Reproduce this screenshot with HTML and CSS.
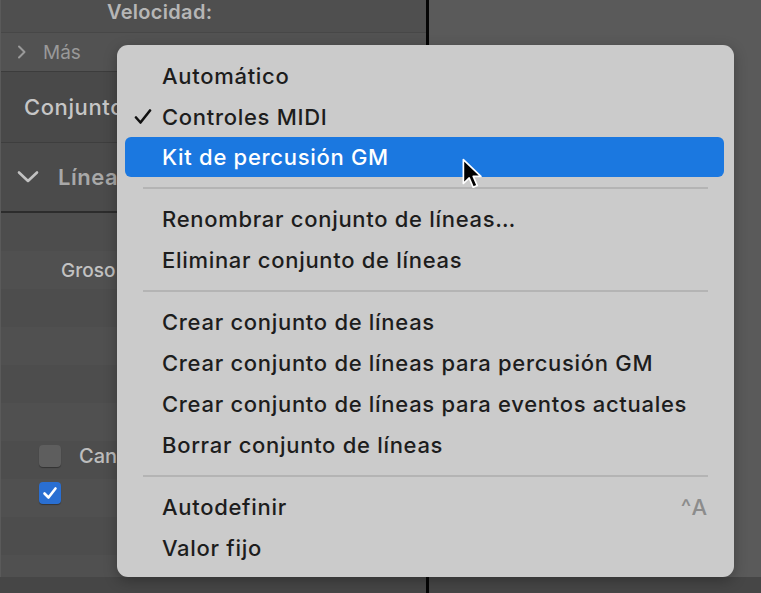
FILE: index.html
```html
<!DOCTYPE html>
<html lang="es">
<head>
    <meta charset="UTF-8">
    <meta name="viewport" content="width=device-width, initial-scale=1.0">
    <title>Conjunto de líneas</title>
    <link rel="stylesheet" href="styles.css">
</head>
<body>
    <div class="workspace">
        <div class="inspector">
            <div class="row row-velocidad"><span class="label-top">Velocidad:</span></div>
            <div class="row row-mas">
                <svg class="chev-right" width="10" height="14" viewBox="0 0 10 14"><path d="M2 1.5 L7.5 7 L2 12.5" fill="none" stroke="#9a9a9a" stroke-width="2" stroke-linecap="round" stroke-linejoin="round"/></svg>
                <span>Más</span>
            </div>
            <div class="row row-conjunto"><span>Conjunto</span></div>
            <div class="row row-linea">
                <svg class="chev-down" width="22" height="14" viewBox="0 0 22 14"><path d="M2 2.5 L11 11 L20 2.5" fill="none" stroke="#c2c2c2" stroke-width="2.6" stroke-linecap="round" stroke-linejoin="round"/></svg>
                <span>Línea</span>
            </div>
            <div class="stripes">
                <div class="stripe"></div>
                <div class="stripe"><span class="groso">Groso</span></div>
                <div class="stripe"></div>
                <div class="stripe"></div>
                <div class="stripe"></div>
                <div class="stripe"></div>
                <div class="stripe check-row"><span class="box"></span><span class="cana">Cana</span></div>
                <div class="stripe check-row"><span class="box box-on"><svg width="16" height="14" viewBox="0 0 16 14"><path d="M2.5 7.5 L6.5 11.5 L13.5 2.5" fill="none" stroke="#fff" stroke-width="2.6" stroke-linecap="round" stroke-linejoin="round"/></svg></span></div>
                <div class="stripe"></div>
                <div class="stripe"></div>
            </div>
        </div>
        <div class="divider"></div>
        <div class="canvas"></div>
    </div>
    <div class="footer">
        <div class="footer-left"></div>
        <div class="divider"></div>
        <div class="footer-right"></div>
    </div>

    <div class="menu">
        <div class="item">Automático</div>
        <div class="item checked">
            <svg class="tick" width="18" height="16" viewBox="0 0 18 16"><path d="M2 8.5 L6.5 13.5 L16 1.5" fill="none" stroke="#111" stroke-width="2.6" stroke-linecap="round" stroke-linejoin="round"/></svg>
            Controles MIDI
        </div>
        <div class="item active">Kit de percusión GM</div>
        <div class="sep"></div>
        <div class="item">Renombrar conjunto de líneas…</div>
        <div class="item">Eliminar conjunto de líneas</div>
        <div class="sep"></div>
        <div class="item">Crear conjunto de líneas</div>
        <div class="item">Crear conjunto de líneas para percusión GM</div>
        <div class="item">Crear conjunto de líneas para eventos actuales</div>
        <div class="item">Borrar conjunto de líneas</div>
        <div class="sep"></div>
        <div class="item">Autodefinir <span class="shortcut">^A</span></div>
        <div class="item">Valor fijo</div>
    </div>

    <svg class="cursor" width="26" height="34" viewBox="0 0 24 32">
        <path d="M2 1.5 L2 24 L7.5 18.8 L11.2 27.5 L15 25.9 L11.3 17.3 L18.5 17.3 Z" fill="#000" stroke="#fff" stroke-width="1.6" stroke-linejoin="round"/>
    </svg>
</body>
</html>
```

FILE: styles.css
```css
html, body {
    margin: 0;
    padding: 0;
}
body {
    width: 761px;
    height: 593px;
    overflow: hidden;
    background-color: #5a5a5a;
    font-family: Inter, "Noto Sans", sans-serif;
    display: flex;
    flex-direction: column;
}
.workspace {
    display: flex;
    height: 577px;
    flex-shrink: 0;
}
.inspector {
    width: 426px;
    background-color: #4d4d4d;
    display: flex;
    flex-direction: column;
    border-left: 1px solid #5a5a5a;
    box-sizing: border-box;
    overflow: hidden;
}
.divider {
    width: 3px;
    background-color: #050505;
}
.canvas {
    flex: 1;
    background-color: #5a5a5a;
}
.row {
    display: flex;
    align-items: center;
    box-sizing: border-box;
    flex-shrink: 0;
}
.row-velocidad {
    height: 33px;
    padding-left: 106px;
    background-color: #4f4f4f;
    border-bottom: 1px solid #474747;
}
.label-top {
    font-size: 20px;
    font-weight: 600;
    letter-spacing: 0.3px;
    color: #b6b6b6;
    margin-top: -8px;
}
.row-mas {
    height: 39px;
    padding-left: 16px;
    background-color: #525252;
    border-bottom: 1px solid #3c3c3c;
    color: #999;
    font-size: 19px;
}
.row-mas span {
    margin-left: 16px;
}
.row-conjunto {
    height: 71px;
    padding-left: 23px;
    background-color: #494949;
    border-bottom: 1px solid #3e3e3e;
    color: #c6c6c6;
    font-size: 22px;
    font-weight: 500;
    letter-spacing: 0.6px;
}
.row-linea {
    height: 70px;
    padding-left: 16px;
    background-color: #4b4b4b;
    border-bottom: 2px solid #2c2c2c;
    color: #a8a8a8;
    font-size: 22px;
    font-weight: 600;
    letter-spacing: 0.5px;
}
.row-linea span {
    margin-left: 19px;
}
.stripes {
    display: flex;
    flex-direction: column;
}
.stripe {
    height: 38px;
    flex-shrink: 0;
    display: flex;
    align-items: center;
    background-color: #4d4d4d;
}
.stripe:nth-child(even) {
    background-color: #505050;
}
.groso {
    margin-left: 60px;
    font-size: 19px;
    color: #c2c2c2;
    font-weight: 500;
}
.check-row {
    padding-left: 38px;
    align-items: flex-start;
}
.box {
    width: 22px;
    height: 22px;
    margin-top: 4px;
    border-radius: 4px;
    background-color: #5e5e5e;
    box-shadow: 0 1px 1px rgba(0, 0, 0, 0.35);
    display: flex;
    align-items: center;
    justify-content: center;
}
.box-on {
    background-color: #2a6fd2;
    margin-top: 3px;
}
.cana {
    margin-left: 18px;
    margin-top: 3px;
    font-size: 20px;
    color: #bdbdbd;
    font-weight: 500;
}
.footer {
    display: flex;
    height: 16px;
    flex-shrink: 0;
    background-color: #464646;
    border-bottom: 1px solid #5a5a5a;
}
.footer-left {
    width: 426px;
}
.footer-right {
    flex: 1;
}
.menu {
    position: absolute;
    left: 117px;
    top: 45px;
    width: 617px;
    height: 532px;
    box-sizing: border-box;
    padding: 10px 10px 8px 8px;
    background-color: #cbcbcb;
    border-radius: 11px;
    box-shadow: 0 4px 14px rgba(0, 0, 0, 0.28);
    display: flex;
    flex-direction: column;
}
.item {
    height: 41px;
    flex-shrink: 0;
    display: flex;
    align-items: center;
    padding-left: 37px;
    padding-right: 15px;
    border-radius: 6px;
    font-size: 22px;
    font-weight: 500;
    letter-spacing: 0.7px;
    color: #1d1d1d;
    position: relative;
}
.item.active {
    background-color: #1b78e0;
    color: #fff;
    height: 40px;
}
.tick {
    position: absolute;
    left: 9px;
    top: 13px;
}
.shortcut {
    margin-left: auto;
    color: #8c8c8c;
    letter-spacing: 2px;
}
.sep {
    height: 21px;
    flex-shrink: 0;
    display: flex;
    align-items: center;
    margin: 0 16px 0 18px;
}
.sep::before {
    content: "";
    flex: 1;
    height: 2px;
    background-color: #b4b4b4;
}
.cursor {
    position: absolute;
    left: 461px;
    top: 158px;
}
```
